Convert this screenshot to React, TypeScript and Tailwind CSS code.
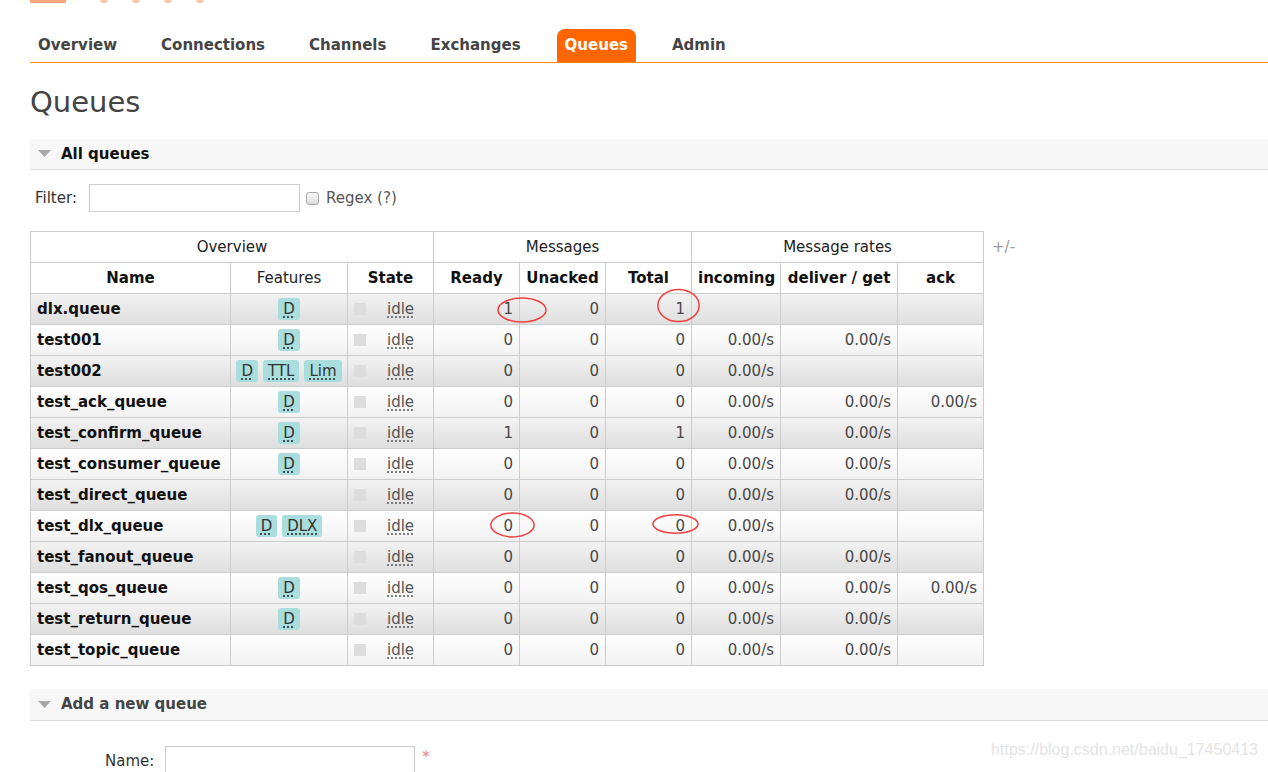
import React from "react";

type Queue = {
  name: string;
  features: string[];
  ready: string;
  unacked: string;
  total: string;
  incoming: string;
  deliver: string;
  ack: string;
};

const queues: Queue[] = [
  { name: "dlx.queue", features: ["D"], ready: "1", unacked: "0", total: "1", incoming: "", deliver: "", ack: "" },
  { name: "test001", features: ["D"], ready: "0", unacked: "0", total: "0", incoming: "0.00/s", deliver: "0.00/s", ack: "" },
  { name: "test002", features: ["D", "TTL", "Lim"], ready: "0", unacked: "0", total: "0", incoming: "0.00/s", deliver: "", ack: "" },
  { name: "test_ack_queue", features: ["D"], ready: "0", unacked: "0", total: "0", incoming: "0.00/s", deliver: "0.00/s", ack: "0.00/s" },
  { name: "test_confirm_queue", features: ["D"], ready: "1", unacked: "0", total: "1", incoming: "0.00/s", deliver: "0.00/s", ack: "" },
  { name: "test_consumer_queue", features: ["D"], ready: "0", unacked: "0", total: "0", incoming: "0.00/s", deliver: "0.00/s", ack: "" },
  { name: "test_direct_queue", features: [], ready: "0", unacked: "0", total: "0", incoming: "0.00/s", deliver: "0.00/s", ack: "" },
  { name: "test_dlx_queue", features: ["D", "DLX"], ready: "0", unacked: "0", total: "0", incoming: "0.00/s", deliver: "", ack: "" },
  { name: "test_fanout_queue", features: [], ready: "0", unacked: "0", total: "0", incoming: "0.00/s", deliver: "0.00/s", ack: "" },
  { name: "test_qos_queue", features: ["D"], ready: "0", unacked: "0", total: "0", incoming: "0.00/s", deliver: "0.00/s", ack: "0.00/s" },
  { name: "test_return_queue", features: ["D"], ready: "0", unacked: "0", total: "0", incoming: "0.00/s", deliver: "0.00/s", ack: "" },
  { name: "test_topic_queue", features: [], ready: "0", unacked: "0", total: "0", incoming: "0.00/s", deliver: "0.00/s", ack: "" },
];

const tabs = ["Overview", "Connections", "Channels", "Exchanges", "Queues", "Admin"];

function Triangle() {
  return (
    <svg width="13" height="8" viewBox="0 0 13 8" className="shrink-0">
      <path d="M0 0H13L6.5 7Z" fill="#a8a8a8" />
    </svg>
  );
}

function Ring({ className }: { className: string }) {
  return (
    <svg className={"pointer-events-none absolute " + className} viewBox="0 0 100 50" preserveAspectRatio="none">
      <ellipse cx="50" cy="25" rx="48" ry="23" fill="none" stroke="#f04040" strokeWidth="1.5" vectorEffect="non-scaling-stroke" />
    </svg>
  );
}

const cell = "border border-[#cccccc] px-[6px] h-[31px]";

export default function App() {
  return (
    <div className="relative w-[1268px] h-[772px] overflow-hidden bg-white text-[#484848] [font-family:'DejaVu_Sans',Verdana,sans-serif] text-[15px]">
      {/* cut-off logo */}
      <div className="flex items-start gap-[24px] h-[3px] pl-[30px]">
        <div className="w-[36px] h-[3px] bg-[#f9a77a]" />
        <div className="ml-[10px] w-[8px] h-[3px] rounded-b-full bg-[#fbc7a8]" />
        <div className="w-[8px] h-[3px] rounded-b-full bg-[#fbc7a8]" />
        <div className="w-[8px] h-[3px] rounded-b-full bg-[#fbc7a8]" />
        <div className="w-[8px] h-[3px] rounded-b-full bg-[#fbc7a8]" />
      </div>

      {/* nav */}
      <div className="ml-[30px] mt-[25px] flex items-end h-[35px] border-b-[1.5px] border-[#ff8800]">
        <div className="flex items-end">
          {tabs.map((t) => (
            <div
              key={t}
              className={
                t === "Queues"
                  ? "h-[33px] px-[8px] mr-[28px] flex items-center rounded-t-[8px] bg-[#ff6600] text-white font-bold text-[15px]"
                  : "h-[33px] px-[8px] mr-[28px] flex items-center text-[#444444] font-bold text-[15px]"
              }
            >
              {t}
            </div>
          ))}
        </div>
      </div>

      <h1 className="ml-[30px] mt-[21px] text-[29px] leading-[36px] text-[#444444]">Queues</h1>

      {/* All queues */}
      <div className="ml-[30px] mt-[19px] h-[31px] flex items-center gap-[10px] pl-[8px] bg-[#f7f7f7] border-b border-[#dddddd]">
        <Triangle />
        <span className="font-bold text-[15px] text-[#111111]">All queues</span>
      </div>

      <div className="ml-[35px] mt-[14px] flex items-center h-[28px]">
        <span className="text-[15px] text-[#333333]">Filter:</span>
        <div className="ml-[12px] w-[211px] h-[28px] border border-[#cccccc] bg-white" />
        <div className="ml-[6px] w-[13px] h-[13px] rounded-[3px] border border-[#aaaaaa] bg-linear-to-b from-[#fafafa] to-[#dddddd]" />
        <span className="ml-[7px] text-[15px] text-[#555555]">Regex (?)</span>
      </div>

      {/* table */}
      <div className="relative ml-[30px] mt-[19px] flex items-start">
        <table className="table-fixed w-[954px] border-collapse text-[15px]">
          <colgroup>
            <col className="w-[200px]" />
            <col className="w-[117px]" />
            <col className="w-[86px]" />
            <col className="w-[86px]" />
            <col className="w-[86px]" />
            <col className="w-[86px]" />
            <col className="w-[89px]" />
            <col className="w-[117px]" />
            <col className="w-[86px]" />
          </colgroup>
          <thead>
            <tr>
              <th colSpan={3} className={cell + " font-normal text-[#222222]"}>Overview</th>
              <th colSpan={3} className={cell + " font-normal text-[#222222]"}>Messages</th>
              <th colSpan={3} className={cell + " font-normal text-[#222222]"}>Message rates</th>
            </tr>
            <tr>
              <th className={cell + " text-[#111111]"}>Name</th>
              <th className={cell + " font-normal text-[#222222]"}>Features</th>
              <th className={cell + " text-[#111111]"}>State</th>
              <th className={cell + " text-[#111111]"}>Ready</th>
              <th className={cell + " text-[#111111] whitespace-nowrap px-[2px]"}>Unacked</th>
              <th className={cell + " text-[#111111]"}>Total</th>
              <th className={cell + " text-[#111111] whitespace-nowrap px-[2px]"}>incoming</th>
              <th className={cell + " text-[#111111] whitespace-nowrap px-[2px]"}>deliver / get</th>
              <th className={cell + " text-[#111111]"}>ack</th>
            </tr>
          </thead>
          <tbody>
            {queues.map((q, i) => (
              <tr
                key={q.name}
                className={
                  i % 2 === 0
                    ? "bg-linear-to-b from-[#f2f2f2] to-[#dedede]"
                    : "bg-linear-to-b from-[#ffffff] to-[#f1f1f1]"
                }
              >
                <td className={cell + " font-bold text-[#111111] whitespace-nowrap"}>{q.name}</td>
                <td className={cell + " text-center whitespace-nowrap px-[2px]"}>
                  <div className="flex justify-center gap-[5px]">
                    {q.features.map((f) => (
                      <span
                        key={f}
                        className="inline-flex h-[22px] items-center rounded-[3px] bg-[#aadddd] px-[5px] text-[#333333] underline decoration-dotted decoration-[#222222] underline-offset-[3px]"
                      >
                        {f}
                      </span>
                    ))}
                  </div>
                </td>
                <td className={cell}>
                  <div className="flex items-center">
                    <div className="w-[12px] h-[12px] bg-[#dddddd]" />
                    <span className="ml-[21px] underline decoration-dotted decoration-[#555555] underline-offset-[3px] text-[#555555]">idle</span>
                  </div>
                </td>
                <td className={cell + " text-right"}>{q.ready}</td>
                <td className={cell + " text-right"}>{q.unacked}</td>
                <td className={cell + " text-right"}>{q.total}</td>
                <td className={cell + " text-right"}>{q.incoming}</td>
                <td className={cell + " text-right"}>{q.deliver}</td>
                <td className={cell + " text-right"}>{q.ack}</td>
              </tr>
            ))}
          </tbody>
        </table>
        <span className="ml-[8px] mt-[5px] text-[15px] text-[#999999]">+/-</span>

        {/* annotation rings */}
        <Ring className="left-[467px] top-[66px] w-[50px] h-[26px]" />
        <Ring className="left-[627px] top-[57px] w-[43px] h-[35px]" />
        <Ring className="left-[460px] top-[281px] w-[45px] h-[26px]" />
        <Ring className="left-[622px] top-[283px] w-[47px] h-[20px]" />
      </div>

      {/* Add a new queue */}
      <div className="ml-[30px] mt-[23px] h-[32px] flex items-center gap-[10px] pl-[8px] bg-[#f7f7f7] border-b border-[#dddddd]">
        <Triangle />
        <span className="font-bold text-[15px] text-[#444444]">Add a new queue</span>
      </div>

      <div className="mt-[25px] flex items-center">
        <span className="ml-[105px] text-[15px] text-[#333333]">Name:</span>
        <div className="ml-[11px] w-[250px] h-[30px] border border-[#cccccc] bg-white" />
        <span className="ml-[7px] self-start text-[15px] text-[#f08080]">*</span>
      </div>

      <div className="absolute right-[10px] bottom-[10px] text-[16px] text-[#e4e4e4] [font-family:'Liberation_Sans',Arial,sans-serif]">
        https://blog.csdn.net/baidu_17450413
      </div>
    </div>
  );
}
